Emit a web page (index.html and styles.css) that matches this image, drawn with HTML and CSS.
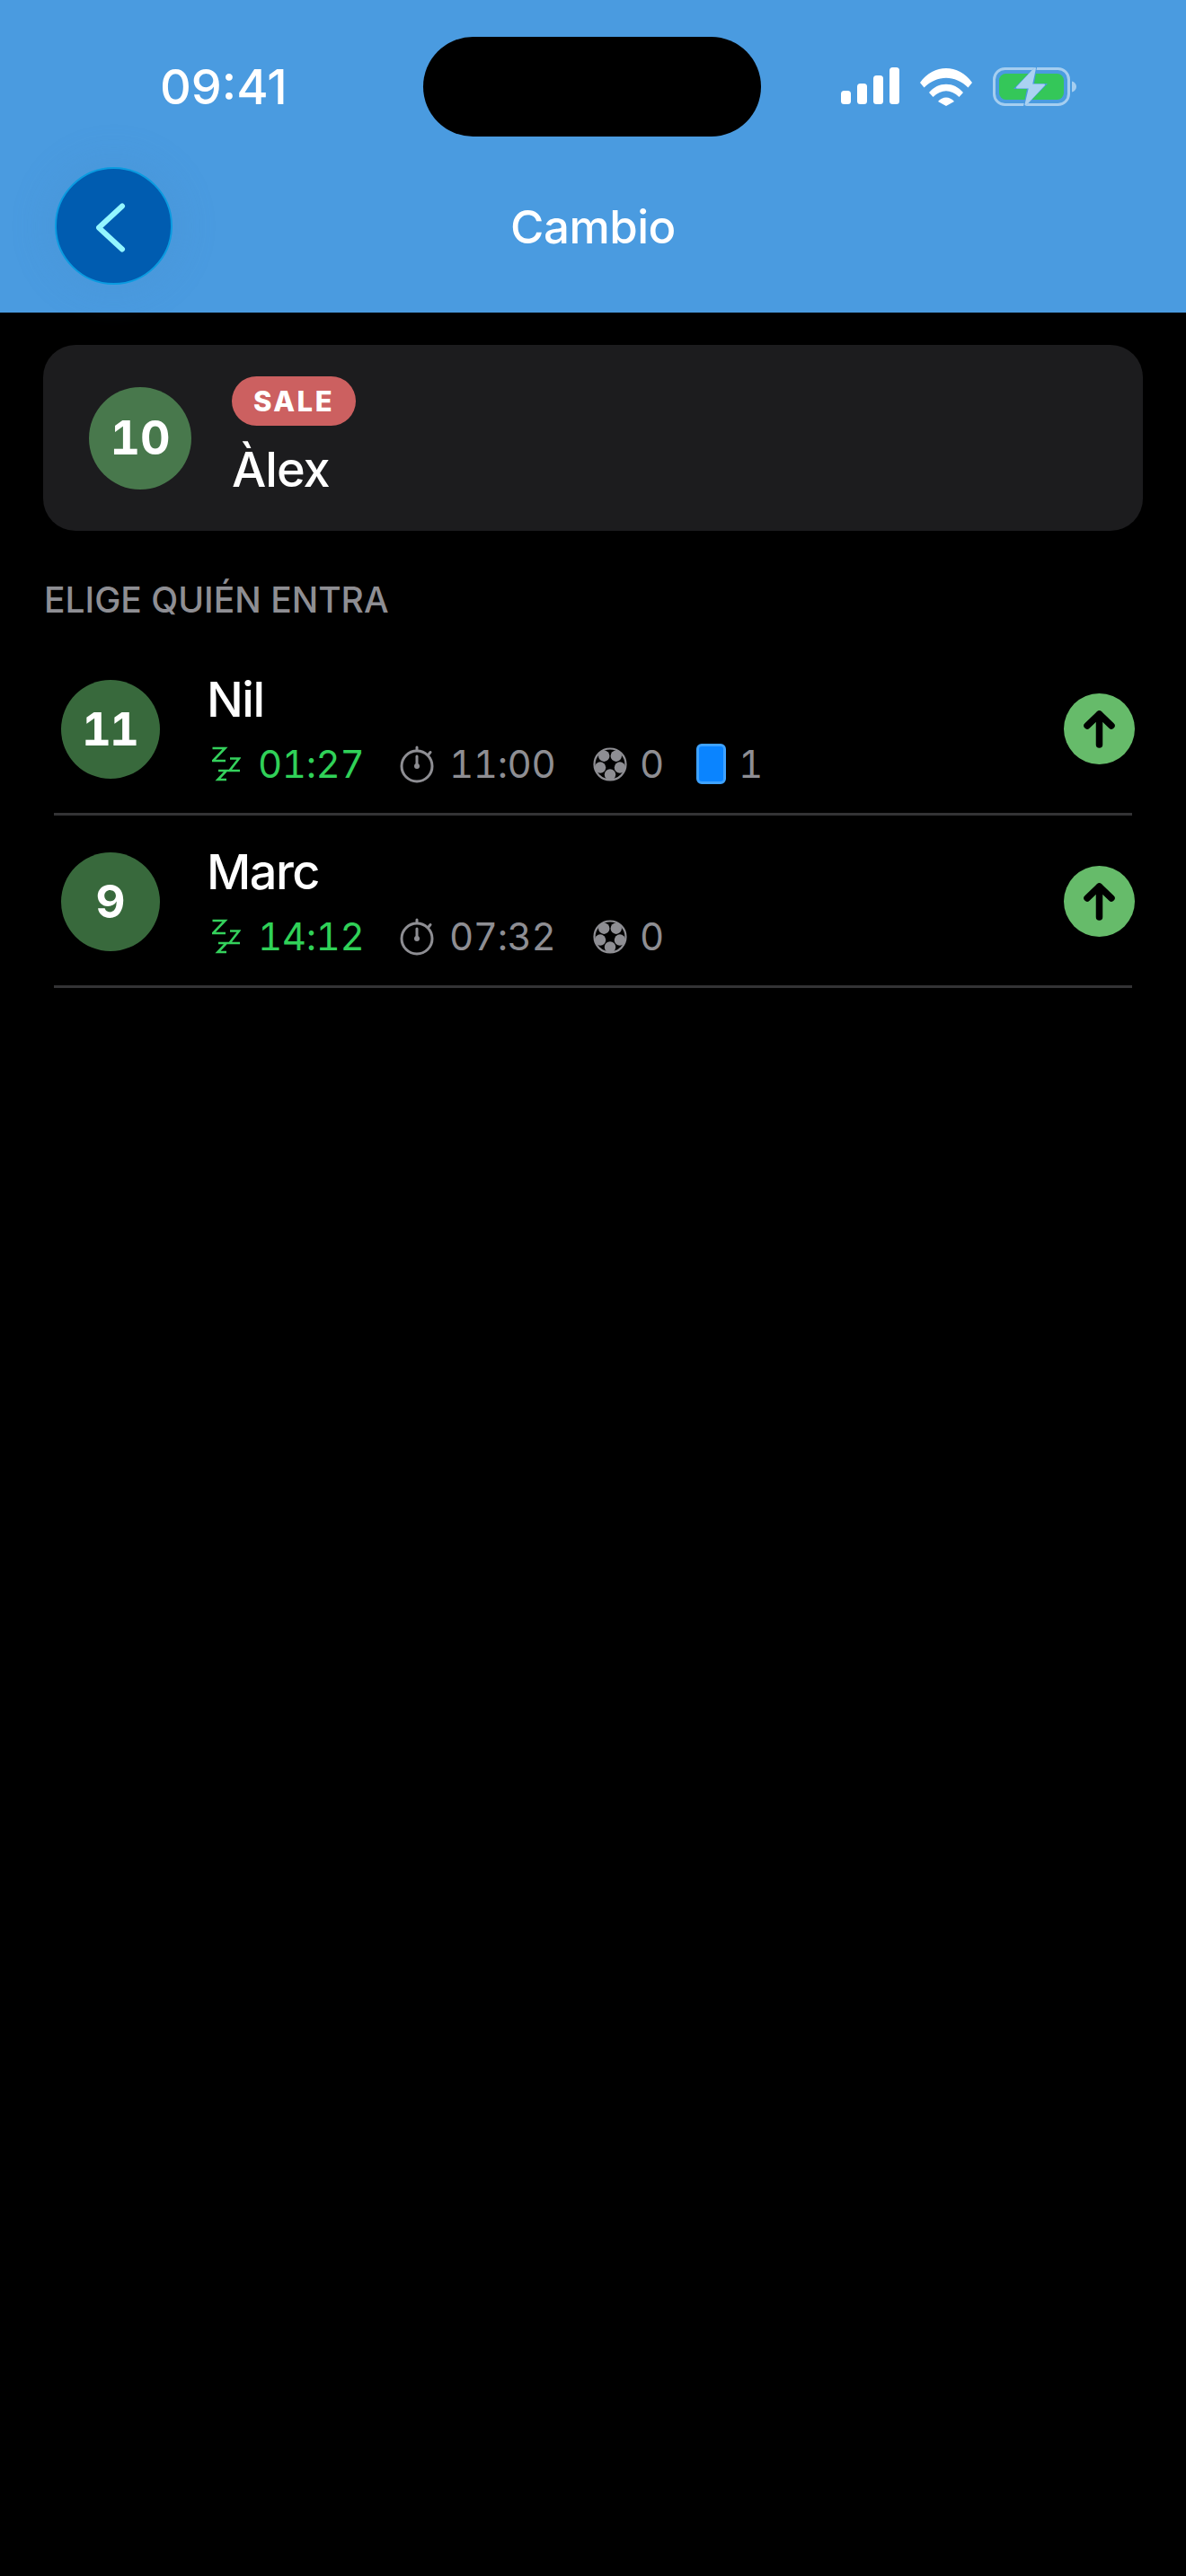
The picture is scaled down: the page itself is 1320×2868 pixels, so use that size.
FILE: index.html
```html
<!DOCTYPE html>
<html lang="es">
<head>
<meta charset="utf-8">
<title>Cambio</title>
<link rel="stylesheet" href="styles.css">
</head>
<body>
<header class="top">
  <div class="status">
    <span class="time">09:41</span>
    <div class="island"></div>
    <div class="status-icons">
      <svg class="signal" viewBox="0 0 65 41" width="65" height="41"><rect x="0" y="26" width="11" height="15" rx="3.5"/><rect x="18" y="18" width="11" height="23" rx="3.5"/><rect x="36" y="9" width="11" height="32" rx="3.5"/><rect x="54" y="0" width="11" height="41" rx="3.5"/></svg>
      <svg class="wifi" viewBox="0 0 58 43" width="58" height="43"><path d="M0 17C15 -4.500 43 -4.500 58 17L53.500 22.500C39 8 19 8 4.500 22.500Z"/><path d="M10 28C20 15.500 38 15.500 48 28L43.500 33C34 24 24 24 14.500 33Z"/><path d="M20 38C25 32 33 32 38 38L29 43Z"/></svg>
      <svg class="battery" viewBox="0 0 93 43" width="93" height="43"><rect x="1.500" y="1.500" width="83" height="40" rx="12" fill="none" stroke="#a5cef0" stroke-width="3"/><rect x="7" y="7" width="72" height="29" rx="7.500" fill="#34c759"/><path d="M88 15.500c3 .8 5 3 5 6s-2 5.200-5 6z" fill="#a5cef0"/><path d="M49.500 -3L23 24h15l-4.500 22L61 18H46z" fill="#4a9be0"/><path d="M47 1L27 22.500h14l-4.500 19L57 19.500H43z" fill="#abd2f2" stroke="#abd2f2" stroke-width="2" stroke-linejoin="round"/></svg>
    </div>
  </div>
  <nav class="nav">
    <button class="back" aria-label="Atrás"><svg viewBox="0 0 40 60" width="40" height="60"><path d="M29 7.500L3 31.500L29 55.500" fill="none" stroke="#93f6ff" stroke-width="6" stroke-linecap="round" stroke-linejoin="round"/></svg></button>
    <h1 class="title">Cambio</h1>
  </nav>
</header>
<main class="content">
  <section class="out-card">
    <div class="num num-out">10</div>
    <div class="out-info">
      <span class="pill">SALE</span>
      <span class="out-name">Àlex</span>
    </div>
  </section>
  <h2 class="section">ELIGE QUIÉN ENTRA</h2>
  <ul class="list">
    <li class="row">
      <div class="num num-row">11</div>
      <div class="info">
        <div class="name">Nil</div>
        <div class="stats">
          <span class="stat stat-rest"><svg class="ic-z" viewBox="0 0 32 40" width="32" height="40"><path d="M0.500 2H14.500L1 16H15M20 13.500H30L19.500 27H31M7 27H16L6.500 37H16" fill="none" stroke="#34d15c" stroke-width="2.600"/></svg><span>01:27</span></span>
          <span class="stat stat-time"><svg class="ic-w" viewBox="0 0 40 42" width="40" height="42"><circle cx="19" cy="23" r="17" fill="none" stroke="#8e8e93" stroke-width="3"/><path d="M19 2V5M34 7.500L32 10M19 12V23" fill="none" stroke="#8e8e93" stroke-width="3" stroke-linecap="round"/><circle cx="19" cy="23" r="3" fill="#8e8e93"/></svg><span>11:00</span></span>
          <span class="stat stat-goal"><svg class="ic-b" viewBox="0 0 38 38" width="38" height="38"><use href="#ball"/></svg><span>0</span></span>
          <span class="stat stat-card"><span class="card"></span><span>1</span></span>
        </div>
      </div>
      <button class="up" aria-label="Entra"><svg viewBox="0 0 35 42" width="35" height="42"><path d="M17.500 38V4M4 17L17.500 4L31 17" fill="none" stroke="#000" stroke-width="7.500" stroke-linecap="round" stroke-linejoin="round"/></svg></button>
    </li>
    <li class="row">
      <div class="num num-row">9</div>
      <div class="info">
        <div class="name">Marc</div>
        <div class="stats">
          <span class="stat stat-rest"><svg class="ic-z" viewBox="0 0 32 40" width="32" height="40"><path d="M0.500 2H14.500L1 16H15M20 13.500H30L19.500 27H31M7 27H16L6.500 37H16" fill="none" stroke="#34d15c" stroke-width="2.600"/></svg><span>14:12</span></span>
          <span class="stat stat-time"><svg class="ic-w" viewBox="0 0 40 42" width="40" height="42"><circle cx="19" cy="23" r="17" fill="none" stroke="#8e8e93" stroke-width="3"/><path d="M19 2V5M34 7.500L32 10M19 12V23" fill="none" stroke="#8e8e93" stroke-width="3" stroke-linecap="round"/><circle cx="19" cy="23" r="3" fill="#8e8e93"/></svg><span>07:32</span></span>
          <span class="stat stat-goal"><svg class="ic-b" viewBox="0 0 38 38" width="38" height="38"><use href="#ball"/></svg><span>0</span></span>
        </div>
      </div>
      <button class="up" aria-label="Entra"><svg viewBox="0 0 35 42" width="35" height="42"><path d="M17.500 38V4M4 17L17.500 4L31 17" fill="none" stroke="#000" stroke-width="7.500" stroke-linecap="round" stroke-linejoin="round"/></svg></button>
    </li>
  </ul>
</main>
<svg class="defs" width="0" height="0" aria-hidden="true"><defs><g id="ball"><circle cx="19" cy="19" r="17.500" fill="none" stroke="#8e8e93" stroke-width="2.200"/><g fill="#8e8e93"><circle cx="25.760" cy="9.700" r="6.200"/><circle cx="29.940" cy="22.550" r="6.200"/><circle cx="19" cy="30.500" r="6.200"/><circle cx="8.060" cy="22.550" r="6.200"/><circle cx="12.240" cy="9.700" r="6.200"/></g></g></defs></svg>
</body>
</html>
```
FILE: styles.css
```css
* { box-sizing: border-box; }
html, body { margin: 0; padding: 0; background: #000; }
body { width: 1320px; height: 2868px; font-family: Inter, "Liberation Sans", sans-serif; color: #fff; overflow: hidden; }
button { border: 0; padding: 0; font: inherit; }
ul { list-style: none; margin: 0; padding: 0; }
h1, h2 { margin: 0; font-weight: inherit; font-size: inherit; }

.top { height: 348px; background: #4a9be0; display: flex; flex-direction: column; }
.status { height: 186px; padding: 41px 122px 0 178px; display: flex; align-items: flex-start; }
.time { width: 293px; font-size: 54px; line-height: 111px; font-weight: 500; }
.island { width: 377px; height: 111px; border-radius: 56px; background: #000; }
.status-icons { margin-left: 89px; padding-top: 34px; display: flex; gap: 23px; align-items: flex-start; }
.signal, .wifi { fill: #fff; display: block; }
.battery { display: block; overflow: visible; }

.nav { flex: 1; position: relative; padding: 0 0 31px 61px; display: flex; align-items: flex-start; }
.back { width: 131px; height: 131px; border-radius: 50%; background: #005cb0; border: 2px solid #0a9be0; box-shadow: 0 0 36px 14px rgba(70,140,200,.18); display: flex; align-items: center; justify-content: center; }
.back svg { display: block; }
.title { position: absolute; left: 0; right: 0; top: 1px; height: 131px; line-height: 131px; text-align: center; font-size: 51px; font-weight: 500; letter-spacing: -.5px; }

.content { padding: 36px 48px 0 48px; }
.out-card { height: 207px; border-radius: 36px; background: #1c1c1e; padding: 0 51px; display: flex; align-items: center; gap: 45px; }
.num { border-radius: 50%; display: flex; align-items: center; justify-content: center; color: #fff; font-weight: 700; flex: none; font-variant-numeric: tabular-nums; }
.num-out { width: 114px; height: 114px; background: #48784c; font-size: 52px; }
.out-info { display: flex; flex-direction: column; align-items: flex-start; gap: 16px; }
.pill { height: 55px; width: 138px; border-radius: 28px; background: #cc6060; display: flex; align-items: center; justify-content: center; font-size: 31px; font-weight: 800; letter-spacing: 2.5px; }
.out-name { font-size: 54px; line-height: 66px; font-weight: 500; letter-spacing: -1px; }

.section { margin: 53px 0 0 1px; font-size: 39px; line-height: 48px; font-weight: 500; color: #8e8e93; }

.list { margin-top: 24px; }
.row { height: 192px; margin: 0 12px; padding: 2px 0 0 8px; border-bottom: 3px solid #333335; display: flex; align-items: center; }
.num-row { width: 110px; height: 110px; padding-right: 2px; background: #38693c; font-size: 51px; letter-spacing: -2px; }
.info { flex: 1; margin-left: 52px; padding-bottom: 3px; display: flex; flex-direction: column; gap: 15px; }
.name { font-size: 54px; line-height: 66px; font-weight: 500; letter-spacing: -1.5px; }
.stats { display: flex; align-items: center; height: 48px; color: #8e8e93; font-size: 42px; letter-spacing: -.4px; font-variant-numeric: tabular-nums; }
.stat { display: flex; align-items: center; }
.stat-rest { color: #30d158; width: 209px; gap: 19px; margin-left: 6px; }
.stat-time { width: 215px; gap: 15px; }
.stat-goal { width: 115px; gap: 14px; }
.stat-card { gap: 14px; }
.card { display: block; width: 33px; height: 45px; border-radius: 6px; background: #0a84ff; border: 3px solid #3ea2ff; }
.up { width: 79px; height: 79px; margin: 0 -3px 0 0; border-radius: 50%; background: #66bb6a; display: flex; align-items: center; justify-content: center; }
.up svg { display: block; }
.defs { position: absolute; }
```
